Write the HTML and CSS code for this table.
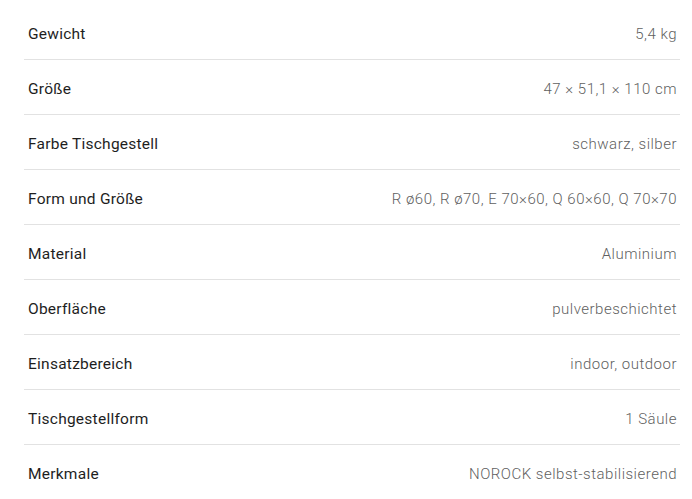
FILE: index.html
```html
<!DOCTYPE html>
<html lang="de">
<head>
<meta charset="utf-8">
<link rel="stylesheet" href="styles.css">
</head>
<body>
<dl class="specs">
  <div class="row"><dt>Gewicht</dt><dd>5,4 kg</dd></div>
  <div class="row"><dt>Größe</dt><dd>47 × 51,1 × 110 cm</dd></div>
  <div class="row"><dt>Farbe Tischgestell</dt><dd>schwarz, silber</dd></div>
  <div class="row"><dt>Form und Größe</dt><dd>R ø60, R ø70, E 70×60, Q 60×60, Q 70×70</dd></div>
  <div class="row"><dt>Material</dt><dd>Aluminium</dd></div>
  <div class="row"><dt>Oberfläche</dt><dd>pulverbeschichtet</dd></div>
  <div class="row"><dt>Einsatzbereich</dt><dd>indoor, outdoor</dd></div>
  <div class="row"><dt>Tischgestellform</dt><dd>1 Säule</dd></div>
  <div class="row"><dt>Merkmale</dt><dd>NOROCK selbst-stabilisierend</dd></div>
</dl>
</body>
</html>
```
FILE: styles.css
```css
html, body {
  margin: 0;
  padding: 0;
  background: #fff;
}
.specs {
  margin: 5px 12px 0 24px;
  padding: 0;
  font-family: Roboto, "Noto Sans", sans-serif;
}
.row {
  display: flex;
  justify-content: space-between;
  align-items: center;
  height: 54px;
  box-sizing: content-box;
  padding: 0 3px 0 4px;
  border-bottom: 1px solid #e2e2e2;
}
.row:last-child {
  border-bottom: none;
}
dt {
  font-size: 15.5px;
  color: #1e1e1e;
  font-weight: 400;
  letter-spacing: 0.25px;
  padding-top: 4px;
}
dd {
  margin: 0;
  font-size: 15px;
  color: #5f5f5f;
  letter-spacing: 0.5px;
  font-weight: 300;
  padding-top: 4px;
}
```
